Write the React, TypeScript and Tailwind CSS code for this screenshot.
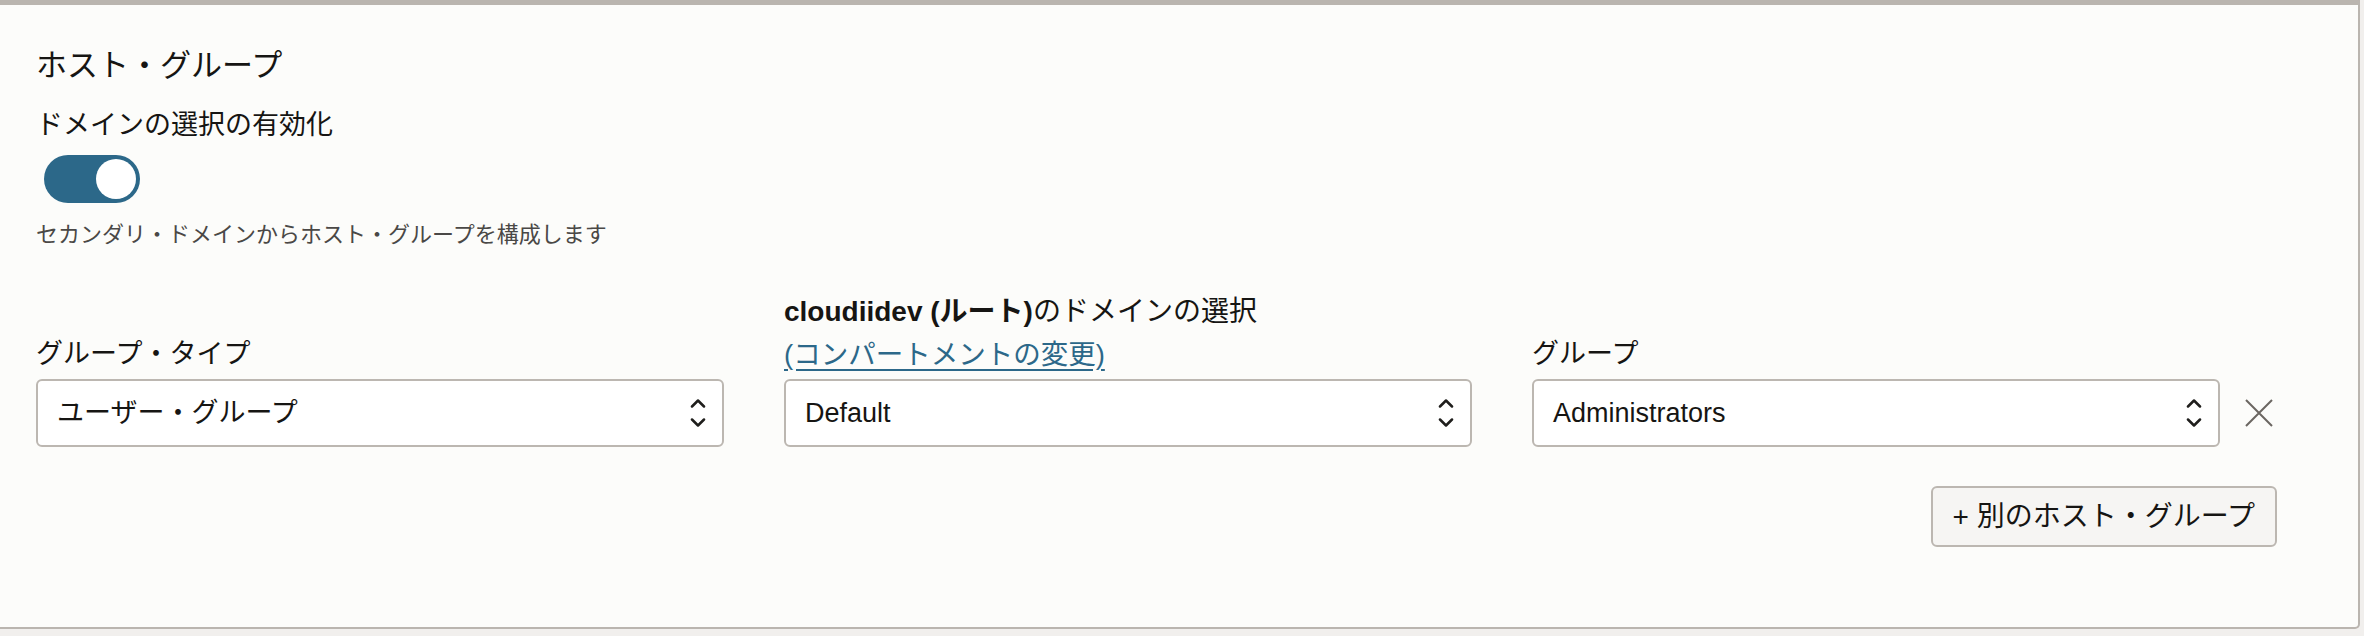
import React, { useState } from 'react';

const font = { fontFamily: '"Liberation Sans", "Noto Sans CJK JP", sans-serif' };

const Chevrons: React.FC = () => (
  <svg width="16" height="28" viewBox="0 0 16 28" fill="none" stroke="#1f1e1c" strokeWidth="2.5" strokeLinecap="round" strokeLinejoin="round">
    <path d="M2 7.5L8 1.5L14 7.5" />
    <path d="M2 20.5L8 26.5L14 20.5" />
  </svg>
);

interface SelectBoxProps {
  value: string;
}

const SelectBox: React.FC<SelectBoxProps> = ({ value }) => (
  <div className="flex h-[68px] items-center justify-between rounded-[6px] border-2 border-[#bcb7b1] bg-white pl-[19px] pr-4">
    <span className="text-[27px] leading-[32px] text-[#161513]">{value}</span>
    <Chevrons />
  </div>
);

const App: React.FC = () => {
  const [enabled, setEnabled] = useState<boolean>(true);

  return (
    <div className="h-[636px] w-full bg-[#f1efed]" style={font}>
      <div className="h-[629px] w-[2360px] rounded-br-[5px] border-t-[5px] border-r-2 border-b-2 border-[#bab5af] bg-[#fcfcfa] pl-9 pt-[43px]">
        <h2 className="text-[31px] leading-[36px] text-[#161513]">ホスト・グループ</h2>

        <div className="mt-[25px] text-[27px] leading-[32px] text-[#161513]">ドメインの選択の有効化</div>

        <button
          type="button"
          onClick={() => setEnabled(!enabled)}
          className={`ml-2 mt-[14px] flex h-[48px] w-[96px] items-center rounded-full px-1 ${enabled ? 'justify-end bg-[#2c6889]' : 'justify-start bg-[#8b8580]'}`}
          aria-label="ドメインの選択の有効化"
        >
          <span className="block h-[40px] w-[40px] rounded-full bg-white" />
        </button>

        <p className="mt-[18px] text-[22px] leading-[28px] text-[#4a4846]">セカンダリ・ドメインからホスト・グループを構成します</p>

        <div className="mt-[41px] flex items-end">
          <div className="grid grid-cols-[688px_688px_688px] items-end gap-x-[60px]">
            <div>
              <div className="mb-[3px] text-[27px] leading-[43px] text-[#161513]">グループ・タイプ</div>
              <SelectBox value="ユーザー・グループ" />
            </div>
            <div>
              <div className="text-[28px] leading-[43px] text-[#161513]">
                <span className="font-bold">cloudiidev (ルート)</span>のドメインの選択
              </div>
              <a href="#" className="mb-[3px] block text-[27.5px] leading-[43px] text-[#2c6889] underline underline-offset-[5px]">
                (コンパートメントの変更)
              </a>
              <SelectBox value="Default" />
            </div>
            <div>
              <div className="mb-[3px] text-[27px] leading-[43px] text-[#161513]">グループ</div>
              <SelectBox value="Administrators" />
            </div>
          </div>
          <div className="ml-[25px] flex h-[68px] items-center">
            <svg width="28" height="28" viewBox="0 0 28 28" fill="none" stroke="#6b6661" strokeWidth="2">
              <path d="M1 1L27 27M27 1L1 27" />
            </svg>
          </div>
        </div>

        <div className="mt-[39px] flex w-[2241px] justify-end">
          <button type="button" className="h-[61px] rounded-[6px] border-2 border-[#bcb7b1] bg-[#f6f5f3] px-[20px] text-[28px] leading-[32px] text-[#161513]">
            + 別のホスト・グループ
          </button>
        </div>
      </div>
    </div>
  );
};

export default App;
